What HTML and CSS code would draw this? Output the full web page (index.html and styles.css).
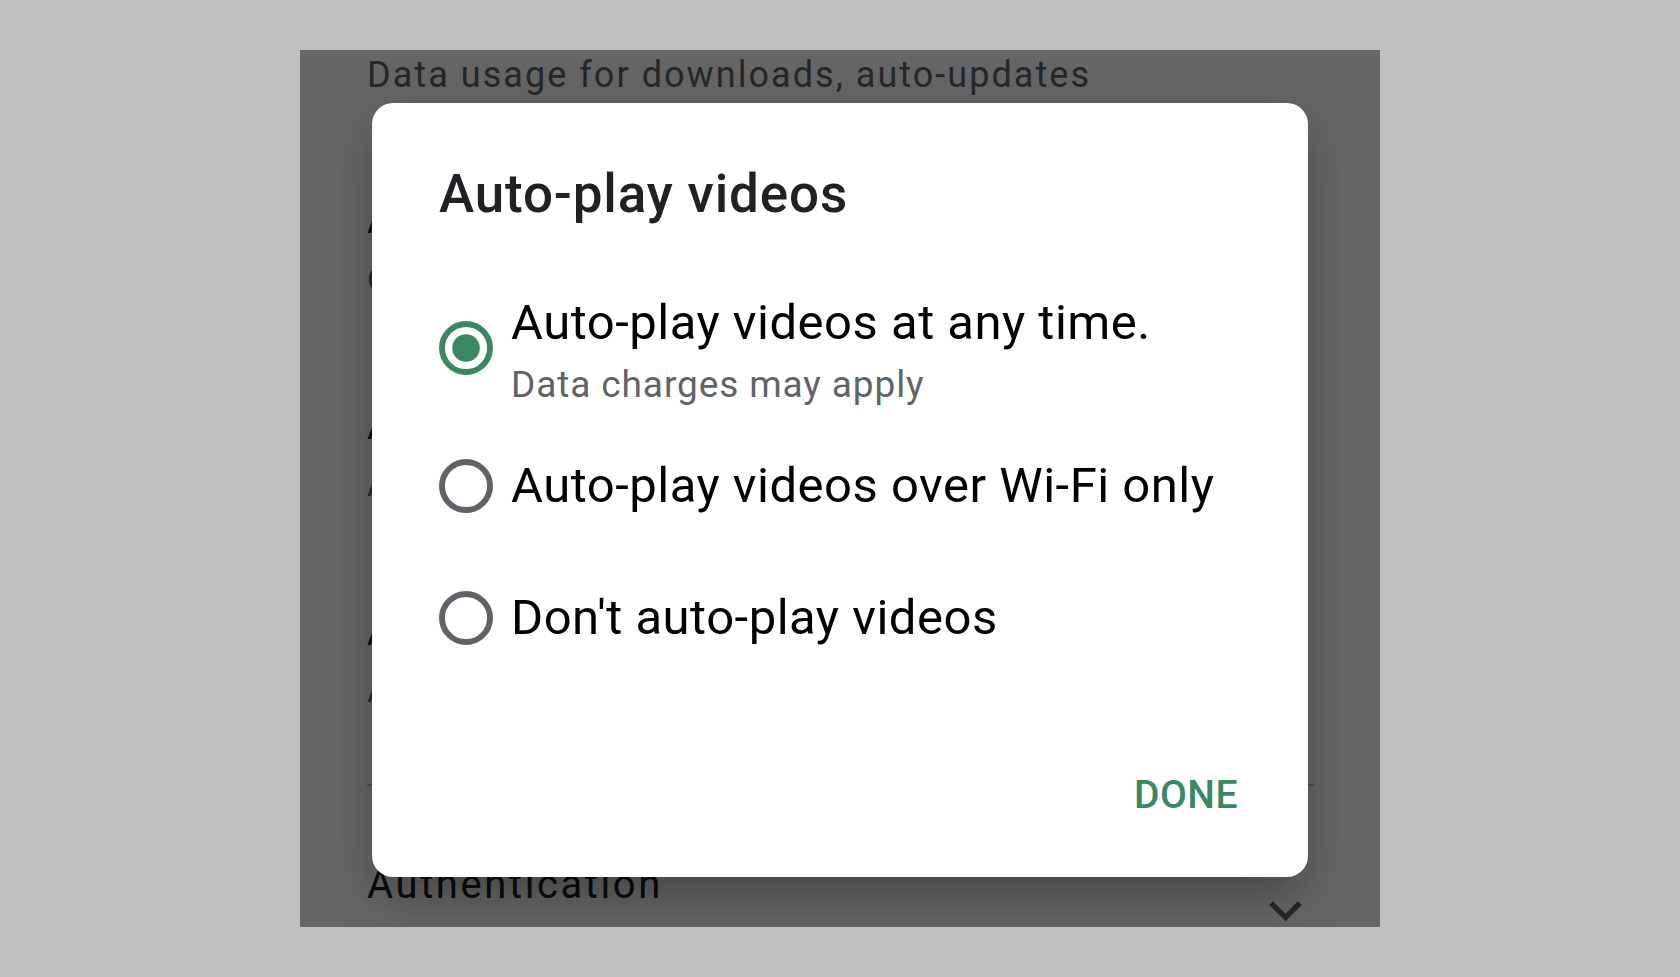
FILE: index.html
```html
<!DOCTYPE html>
<html lang="en">
<head>
<meta charset="utf-8">
<title>Settings – Auto-play videos</title>
<link rel="stylesheet" href="styles.css">
</head>
<body>
<div class="stage">
  <div class="screen">
    <div class="settings">
      <p class="section-sub">Data usage for downloads, auto-updates</p>
      <div class="pref pref--first">
        <p class="pref-title">App download preference</p>
        <p class="pref-sub">Over any network</p>
      </div>
      <div class="pref">
        <p class="pref-title">Auto-update apps</p>
        <p class="pref-sub">Auto-update apps over Wi-Fi only</p>
      </div>
      <div class="pref">
        <p class="pref-title">Auto-play videos</p>
        <p class="pref-sub">Auto-play videos over Wi-Fi only</p>
      </div>
      <hr class="divider">
      <div class="section-row">
        <span class="section-title">Authentication</span>
        <svg class="chevron" viewBox="0 0 24 24" aria-hidden="true">
          <path d="M16.59 8.59 12 13.17 7.41 8.59 6 10l6 6 6-6z"/>
        </svg>
      </div>
    </div>

    <div class="scrim">
      <div class="dialog" role="dialog" aria-labelledby="dlg-title">
        <h2 class="dialog-title" id="dlg-title">Auto-play videos</h2>
        <div class="options" role="radiogroup">
          <div class="option option--tall" role="radio" aria-checked="true">
            <svg class="radio radio--on" viewBox="0 0 20 20" aria-hidden="true">
              <circle class="radio-ring" cx="10" cy="10" r="8.9"/>
              <circle class="radio-dot" cx="10" cy="10" r="5.1"/>
            </svg>
            <div class="option-text">
              <span class="option-label">Auto-play videos at any time.</span>
              <span class="option-hint">Data charges may apply</span>
            </div>
          </div>
          <div class="option" role="radio" aria-checked="false">
            <svg class="radio" viewBox="0 0 20 20" aria-hidden="true">
              <circle class="radio-ring" cx="10" cy="10" r="8.9"/>
            </svg>
            <div class="option-text">
              <span class="option-label">Auto-play videos over Wi-Fi only</span>
            </div>
          </div>
          <div class="option option--last" role="radio" aria-checked="false">
            <svg class="radio" viewBox="0 0 20 20" aria-hidden="true">
              <circle class="radio-ring" cx="10" cy="10" r="8.9"/>
            </svg>
            <div class="option-text">
              <span class="option-label">Don't auto-play videos</span>
            </div>
          </div>
        </div>
        <div class="actions">
          <button class="text-button" type="button">DONE</button>
        </div>
      </div>
    </div>
  </div>
</div>
</body>
</html>
```

FILE: styles.css
```css
* { box-sizing: border-box; }

html, body {
  margin: 0;
  padding: 0;
  height: 100%;
}

body {
  background: #c0c0c2;
  font-family: Roboto, "Noto Sans", "Liberation Sans", sans-serif;
}

.stage {
  height: 977px;
  display: flex;
  align-items: center;
  justify-content: center;
}

/* phone screen */
.screen {
  position: relative;
  width: 1080px;
  height: 877px;
  background: #ffffff;
  overflow: hidden;
}

/* settings list underneath the dialog */
.settings {
  padding: 5px 0 0 67px;
}

.settings p { margin: 0; }

.section-sub {
  font-size: 36px;
  line-height: 40px;
  color: #5f6368;
  letter-spacing: 2.05px;
}

.pref { margin-top: 106px; }
.pref--first { margin-top: 104px; }

.pref-title {
  font-size: 36px;
  line-height: 44px;
  color: #202124;
}

.pref-sub {
  margin-top: 16px !important;
  font-size: 32px;
  line-height: 40px;
  color: #5f6368;
}

.divider {
  margin: 73px 66px 0 0;
  border: 0;
  height: 2px;
  background: #c8c8c8;
}

.section-row {
  margin-top: 75px;
  padding-right: 62px;
  display: flex;
  justify-content: space-between;
  align-items: flex-start;
}

.section-title {
  font-size: 40px;
  line-height: 48px;
  color: #202124;
  letter-spacing: 2.6px;
}

.chevron {
  width: 65px;
  height: 65px;
  margin-top: 17px;
  fill: #5f6368;
}

/* modal scrim + dialog */
.scrim {
  position: absolute;
  inset: 0;
  background: rgba(0, 0, 0, 0.6);
  display: flex;
  justify-content: center;
  align-items: flex-start;
  padding-top: 53px;
}

.dialog {
  width: 936px;
  height: 774px;
  background: #ffffff;
  border-radius: 21px;
  padding: 59px 0 0 67px;
  box-shadow:
    0 26px 40px -10px rgba(0, 0, 0, 0.22),
    0 14px 60px 6px rgba(0, 0, 0, 0.12);
}

.dialog-title {
  margin: 0;
  font-size: 53px;
  line-height: 64px;
  font-weight: 500;
  letter-spacing: 0.85px;
  color: #202124;
}

.options {
  margin-top: 56px;
  display: flex;
  flex-direction: column;
}

.option {
  display: flex;
  align-items: center;
  gap: 18px;
  min-height: 133px;
}

.option--tall { min-height: 137px; }
.option--last { min-height: 132px; }

.radio {
  flex: none;
  width: 54px;
  height: 54px;
}

.option--tall .radio { margin-bottom: 5px; }

.radio-ring {
  fill: none;
  stroke: #5f6368;
  stroke-width: 2.2;
}

.radio--on .radio-ring { stroke: #3a8764; }
.radio-dot { fill: #3a8764; }

.option-text {
  display: flex;
  flex-direction: column;
}

.option-label {
  font-size: 49px;
  line-height: 58px;
  letter-spacing: 0.5px;
  color: #000000;
}

.option-hint {
  margin-top: 11px;
  font-size: 37px;
  line-height: 44px;
  letter-spacing: 0.9px;
  color: #5f6368;
}

.actions {
  margin-top: 87px;
  padding-right: 70px;
  display: flex;
  justify-content: flex-end;
}

.text-button {
  margin: 0;
  padding: 0;
  border: 0;
  background: none;
  font-family: inherit;
  font-size: 39px;
  line-height: 48px;
  font-weight: 500;
  letter-spacing: 0.5px;
  color: #3a8764;
}
```
